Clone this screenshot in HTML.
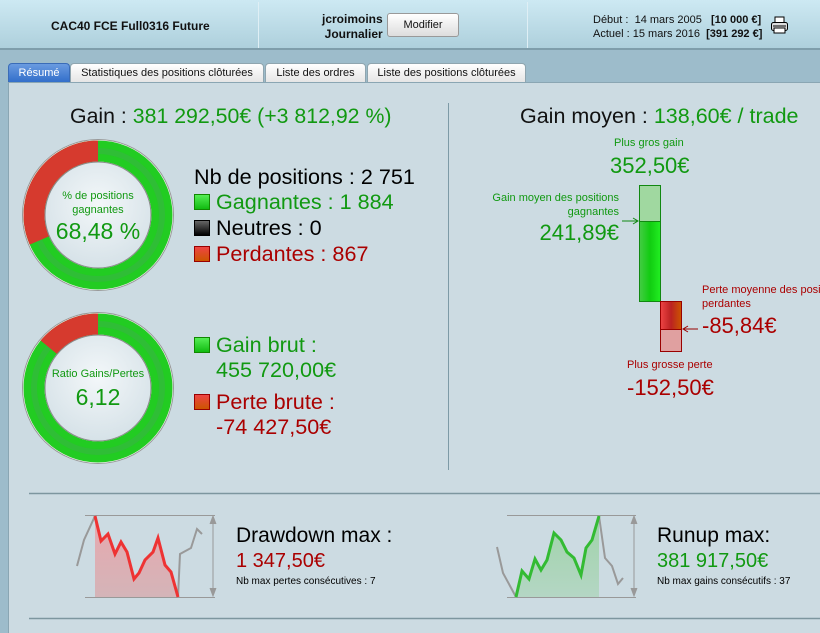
<!DOCTYPE html>
<html><head><meta charset="utf-8"><style>
*{margin:0;padding:0;box-sizing:border-box}
body{width:820px;height:633px;overflow:hidden;background:#9dbccb;font-family:"Liberation Sans",Arial,sans-serif;position:relative}
.a{position:absolute;white-space:nowrap}
.hdr{position:absolute;left:0;top:0;width:820px;height:50px;background:linear-gradient(#cde9f3,#aed0dc);border-bottom:2px solid #7f9eab}
.vd{position:absolute;top:2px;width:1px;height:46px;background:#8aa7b3;border-right:1px solid #dfeff5}
.tab{position:absolute;top:63px;height:20px;border:1px solid #8fa5af;border-bottom:none;border-radius:4px 4px 0 0;background:linear-gradient(#fff,#e4e4e4);font-size:11px;text-align:center;line-height:19px;color:#111}
.panel{position:absolute;left:8px;top:82px;width:812px;height:551px;background:#ccdbe2;border-left:1px solid #8aa6b3;border-top:1px solid #8aa6b3}
.g{color:#119911}.r{color:#aa0000}
.sq{position:absolute;width:16px;height:16px}
.sg{background:linear-gradient(#5e5,#1b1);border:1px solid #180}
.sr{background:linear-gradient(#e44,#c50);border:1px solid #900}
.sb{background:linear-gradient(#666,#000);border:1px solid #000}
</style></head><body>
<div class="hdr"></div>
<div class="vd" style="left:258px"></div>
<div class="vd" style="left:527px"></div>
<div class="a" style="left:51px;top:19px;font-size:12px;font-weight:bold;color:#111">CAC40 FCE Full0316 Future</div>
<div class="a" style="left:322px;top:12px;font-size:12px;font-weight:bold;color:#111;text-align:right;line-height:15px">jcroimoins<br>Journalier</div>
<div class="a" style="left:387px;top:13px;width:72px;height:24px;border:1px solid #999;border-radius:3px;background:linear-gradient(#fff,#ddd);font-size:11px;text-align:center;line-height:22px;color:#111">Modifier</div>
<div class="a" style="left:593px;top:13px;font-size:11px;color:#111;line-height:14px">Début :&nbsp; 14 mars 2005 &nbsp;&nbsp;<b>[10 000 €]</b><br>Actuel : 15 mars 2016 &nbsp;<b>[391 292 €]</b></div>
<svg class="a" style="left:770px;top:16px" width="20" height="18" viewBox="0 0 20 18"><rect x="5" y="1" width="9" height="6" fill="#fff" stroke="#000"/><rect x="1.5" y="6.5" width="16" height="8" rx="2" fill="#ddd" stroke="#000"/><rect x="4" y="12" width="11" height="5" fill="#fff" stroke="#000"/><line x1="3" y1="10" x2="16" y2="10" stroke="#000"/></svg>

<div class="tab" style="left:8px;width:62px;background:linear-gradient(#6a9be0,#2f6cc9);color:#fff;border-color:#3a6cb8">Résumé</div>
<div class="tab" style="left:70px;width:194px">Statistiques des positions clôturées</div>
<div class="tab" style="left:265px;width:101px">Liste des ordres</div>
<div class="tab" style="left:367px;width:159px">Liste des positions clôturées</div>

<div class="panel"></div>

<div class="a" style="left:70px;top:104px;font-size:21.3px;color:#111">Gain : <span class="g">381 292,50€ (+3 812,92 %)</span></div>

<svg class="a" style="left:0;top:0" width="820" height="633">
<defs>
<radialGradient id="ig" cx="50%" cy="40%" r="60%"><stop offset="0" stop-color="#f3f7f9"/><stop offset="1" stop-color="#d6e2e8"/></radialGradient>
<linearGradient id="gf" x1="0" y1="0" x2="0" y2="1"><stop offset="0" stop-color="#e8a8ae"/><stop offset="1" stop-color="#d4b4b8"/></linearGradient>
<linearGradient id="gg" x1="0" y1="0" x2="0" y2="1"><stop offset="0" stop-color="#9fd3a8"/><stop offset="1" stop-color="#b4d6c4"/></linearGradient>
<linearGradient id="bg" x1="0" x2="1"><stop offset="0" stop-color="#4c4"/><stop offset=".5" stop-color="#1c1"/><stop offset="1" stop-color="#2e2"/></linearGradient>
<linearGradient id="br" x1="0" x2="1"><stop offset="0" stop-color="#e44"/><stop offset=".5" stop-color="#b22"/><stop offset="1" stop-color="#c50"/></linearGradient>
</defs>
<circle cx="98" cy="215" r="75.5" fill="#fff" stroke="#999" stroke-width="1"/>
<circle cx="98" cy="215" r="64" fill="none" stroke="#22cc22" stroke-width="21"/>
<circle cx="98" cy="215" r="64" fill="none" stroke="#3bb04a" stroke-width="6" opacity=".5"/>
<path d="M98,151 A64,64 0 0 0 39.3,240.5" fill="none" stroke="#d63a2e" stroke-width="21"/>
<circle cx="98" cy="215" r="53" fill="url(#ig)" stroke="#888" stroke-width="1"/>
<circle cx="98" cy="388" r="75.5" fill="#fff" stroke="#999" stroke-width="1"/>
<circle cx="98" cy="388" r="64" fill="none" stroke="#22cc22" stroke-width="21"/>
<circle cx="98" cy="388" r="64" fill="none" stroke="#3bb04a" stroke-width="6" opacity=".5"/>
<path d="M98,324 A64,64 0 0 0 48.7,347.2" fill="none" stroke="#d63a2e" stroke-width="21"/>
<circle cx="98" cy="388" r="53" fill="url(#ig)" stroke="#888" stroke-width="1"/>

<line x1="448.5" y1="103" x2="448.5" y2="470" stroke="#7d9aa6"/>
<line x1="29" y1="493.5" x2="820" y2="493.5" stroke="#7d969f" stroke-width="1.5"/>
<line x1="29" y1="618.5" x2="820" y2="618.5" stroke="#7d969f" stroke-width="1.5"/>

<rect x="639.5" y="185.5" width="21" height="36" fill="#a0d8a0" stroke="#118811"/>
<rect x="639.5" y="221.5" width="21" height="80" fill="url(#bg)" stroke="#118811"/>
<rect x="660.5" y="301.5" width="21" height="28" fill="url(#br)" stroke="#990000"/>
<rect x="660.5" y="329.5" width="21" height="22" fill="#e0a0a0" stroke="#990000"/>
<line x1="622" y1="221" x2="637" y2="221" stroke="#118811"/><path d="M633,218 L638,221 L633,224" fill="none" stroke="#118811"/>
<line x1="684" y1="329" x2="698" y2="329" stroke="#990000"/><path d="M688,326 L683,329 L688,332" fill="none" stroke="#990000"/>

<line x1="85" y1="515.5" x2="215" y2="515.5" stroke="#999"/>
<line x1="85" y1="597.5" x2="215" y2="597.5" stroke="#999"/>
<line x1="213" y1="518" x2="213" y2="595" stroke="#999"/>
<path d="M210,524 L213,516 L216,524 M210,588 L213,596 L216,588" fill="#999" stroke="#999"/>
<path d="M95,516 L101,541 L108,534 L115,554 L121,542 L127,552 L134,579 L139,573 L145,560 L153,552 L158,538 L165,565 L171,572 L178,597 L95,597Z" fill="url(#gf)"/>
<path d="M77,566 L84,540 L95,516" fill="none" stroke="#999" stroke-width="2"/>
<path d="M178,597 L180,554 L191,548 L197,529 L202,534" fill="none" stroke="#999" stroke-width="2"/>
<path d="M95,516 L101,541 L108,534 L115,554 L121,542 L127,552 L134,579 L139,573 L145,560 L153,552 L158,538 L165,565 L171,572 L178,597" fill="none" stroke="#ee3333" stroke-width="3"/>
<line x1="507" y1="515.5" x2="636" y2="515.5" stroke="#999"/>
<line x1="507" y1="597.5" x2="636" y2="597.5" stroke="#999"/>
<line x1="634" y1="518" x2="634" y2="595" stroke="#999"/>
<path d="M631,524 L634,516 L637,524 M631,588 L634,596 L637,588" fill="#999" stroke="#999"/>
<path d="M516,597 L522,571 L529,579 L535,559 L541,570 L547,560 L554,533 L561,540 L567,552 L574,558 L581,575 L586,548 L592,540 L599,516 L599,597Z" fill="url(#gg)"/>
<path d="M497,547 L503,573 L516,597" fill="none" stroke="#999" stroke-width="2"/>
<path d="M599,516 L605,558 L612,566 L618,584 L623,578" fill="none" stroke="#999" stroke-width="2"/>
<path d="M516,597 L522,571 L529,579 L535,559 L541,570 L547,560 L554,533 L561,540 L567,552 L574,558 L581,575 L586,548 L592,540 L599,516" fill="none" stroke="#33bb33" stroke-width="3"/>
</svg>

<div class="a g" style="left:48px;top:189px;width:100px;text-align:center;font-size:11px;line-height:14px">% de positions<br>gagnantes</div>
<div class="a g" style="left:48px;top:218px;width:100px;text-align:center;font-size:23px">68,48 %</div>
<div class="a g" style="left:40px;top:368px;width:116px;text-align:center;font-size:11px">Ratio Gains/Pertes</div>
<div class="a g" style="left:48px;top:384px;width:100px;text-align:center;font-size:23px">6,12</div>

<div class="a" style="left:194px;top:164px;font-size:21.6px;color:#000">Nb de positions : 2 751</div>
<div class="sq sg" style="left:194px;top:194px"></div><div class="a g" style="left:216px;top:189px;font-size:21.6px">Gagnantes : 1 884</div>
<div class="sq sb" style="left:194px;top:220px"></div><div class="a" style="left:216px;top:215px;font-size:21.6px;color:#000">Neutres : 0</div>
<div class="sq sr" style="left:194px;top:246px"></div><div class="a r" style="left:216px;top:241px;font-size:21.6px">Perdantes : 867</div>

<div class="sq sg" style="left:194px;top:337px"></div><div class="a g" style="left:216px;top:332px;font-size:21.6px">Gain brut :</div>
<div class="a g" style="left:216px;top:357px;font-size:21.6px">455 720,00€</div>
<div class="sq sr" style="left:194px;top:394px"></div><div class="a r" style="left:216px;top:389px;font-size:21.6px">Perte brute :</div>
<div class="a r" style="left:216px;top:414px;font-size:21.6px">-74 427,50€</div>

<div class="a" style="left:520px;top:104px;font-size:21.5px;color:#111">Gain moyen : <span class="g">138,60€ / trade</span></div>
<div class="a g" style="left:614px;top:137px;font-size:11px">Plus gros gain</div>
<div class="a g" style="left:610px;top:153px;font-size:22px">352,50€</div>
<div class="a g" style="left:480px;top:191px;width:139px;text-align:right;font-size:11px;line-height:14px">Gain moyen des positions<br>gagnantes</div>
<div class="a g" style="left:480px;top:220px;width:139px;text-align:right;font-size:22px">241,89€</div>
<div class="a r" style="left:702px;top:283px;font-size:11px;line-height:14px">Perte moyenne des positions<br>perdantes</div>
<div class="a r" style="left:702px;top:313px;font-size:22px">-85,84€</div>
<div class="a r" style="left:627px;top:359px;font-size:11px">Plus grosse perte</div>
<div class="a r" style="left:627px;top:375px;font-size:22px">-152,50€</div>

<div class="a" style="left:236px;top:524px;font-size:21px;color:#000">Drawdown max :</div>
<div class="a r" style="left:236px;top:550px;font-size:20px">1 347,50€</div>
<div class="a" style="left:236px;top:576px;font-size:10px;color:#000">Nb max pertes consécutives : 7</div>
<div class="a" style="left:657px;top:524px;font-size:21px;color:#000">Runup max:</div>
<div class="a g" style="left:657px;top:550px;font-size:20px">381 917,50€</div>
<div class="a" style="left:657px;top:576px;font-size:10px;color:#000">Nb max gains consécutifs : 37</div>
</body></html>
